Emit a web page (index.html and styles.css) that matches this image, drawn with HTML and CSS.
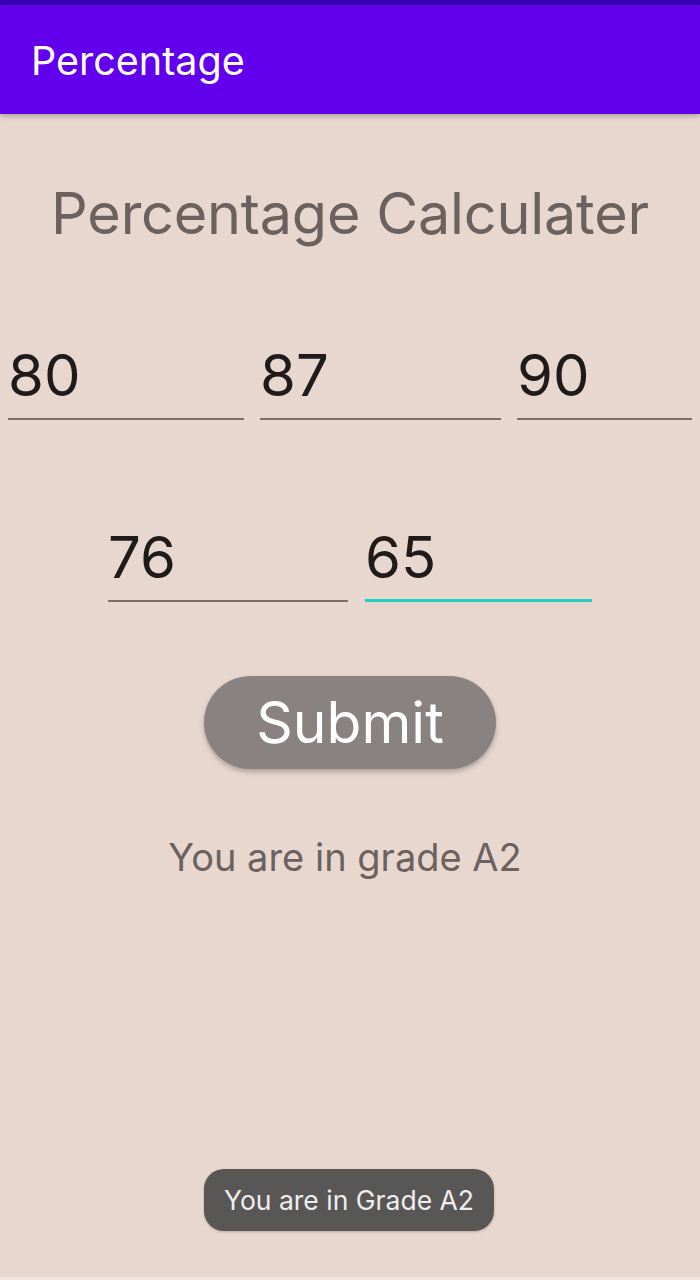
FILE: index.html
```html
<!DOCTYPE html>
<html>
<head>
<meta charset="utf-8">
<link rel="stylesheet" href="styles.css">
</head>
<body>
<div class="screen">
  <div class="status"></div>
  <header class="appbar"><span class="appbar-title">Percentage</span></header>
  <main class="content">
    <h1 class="heading">Percentage Calculater</h1>
    <div class="row row1">
      <div class="field w1"><span class="val">80</span></div>
      <div class="field w2"><span class="val">87</span></div>
      <div class="field w3"><span class="val">90</span></div>
    </div>
    <div class="row row2">
      <div class="field w4"><span class="val">76</span></div>
      <div class="field w5 focused"><span class="val">65</span></div>
    </div>
    <div class="btn-wrap"><div class="submit">Submit</div></div>
    <p class="result">You are in grade A2</p>
  </main>
  <div class="toast">You are in Grade A2</div>
  <div class="navstrip"></div>
</div>
</body>
</html>
```
FILE: styles.css
```css
* { box-sizing: border-box; }
html, body { margin: 0; padding: 0; }
body {
  width: 700px;
  height: 1280px;
  overflow: hidden;
  background: #e8d7cf;
  font-family: Inter, "Noto Sans", sans-serif;
}
.screen {
  position: relative;
  width: 700px;
  height: 1280px;
  display: flex;
  flex-direction: column;
}
.status {
  height: 5px;
  background: #3700b3;
}
.appbar {
  height: 109px;
  background: #6200ee;
  display: flex;
  align-items: center;
  padding-left: 31px;
  box-shadow: 0 2px 5px rgba(0,0,0,0.25);
  position: relative;
  z-index: 1;
}
.appbar-title {
  color: #ffffff;
  font-size: 39.5px;
  font-weight: 400;
  margin-top: 2px;
}
.content {
  flex: 1;
  display: flex;
  flex-direction: column;
  align-items: center;
}
.heading {
  margin: 64px 0 0 0;
  font-size: 57.5px;
  font-weight: 400;
  color: #6b625f;
  line-height: 70px;
  letter-spacing: -0.2px;
}
.row {
  display: flex;
  width: 100%;
}
.row1 {
  margin-top: 88px;
  padding-left: 8px;
  gap: 16px;
}
.row2 {
  margin-top: 98px;
  justify-content: center;
  gap: 17px;
}
.field {
  height: 84px;
  border-bottom: 2px solid #7a6e6a;
  display: flex;
  align-items: flex-end;
  padding-left: 0;
  padding-bottom: 8px;
}
.focused {
  border-bottom: 3px solid #20d0c2;
  padding-bottom: 7px;
}
.w1 { width: 236px; }
.w2 { width: 241px; }
.w3 { width: 175px; }
.w4 { width: 240px; }
.w5 { width: 227px; }
.val {
  font-size: 58px;
  line-height: 70px;
  color: #1f1b1a;
  font-weight: 400;
}
.btn-wrap {
  margin-top: 74px;
}
.submit {
  width: 292px;
  height: 93px;
  border-radius: 47px;
  background: #8a8280;
  color: #ffffff;
  font-size: 57px;
  display: flex;
  align-items: center;
  justify-content: center;
  box-shadow: 0 3px 5px rgba(0,0,0,0.25);
}
.result {
  margin: 64px 10px 0 0;
  font-size: 38px;
  line-height: 48px;
  color: #6b625f;
}
.toast {
  position: absolute;
  left: 204px;
  top: 1169px;
  width: 290px;
  height: 62px;
  border-radius: 20px;
  background: #595755;
  color: #eeeeee;
  font-size: 26.5px;
  display: flex;
  align-items: center;
  justify-content: center;
  box-shadow: 0 1px 3px rgba(0,0,0,0.2);
}
.navstrip {
  height: 3px;
  background: #f1e6e1;
}
```
